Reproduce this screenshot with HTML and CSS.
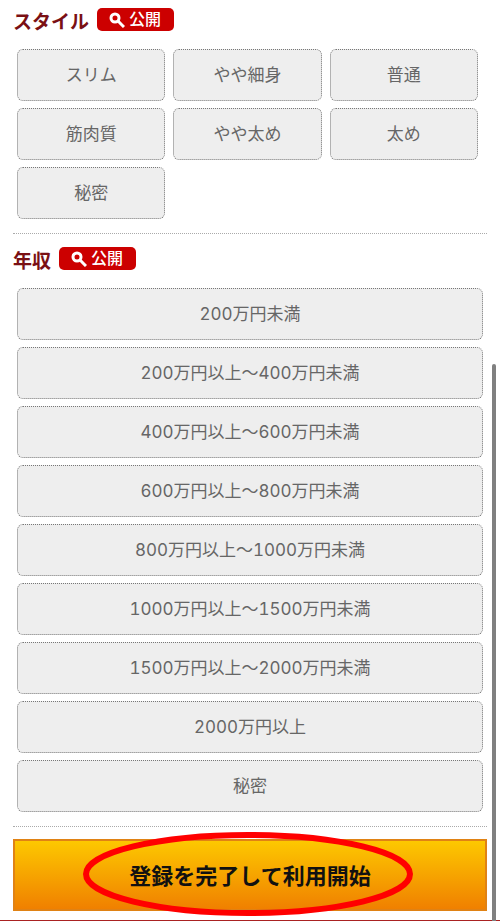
FILE: index.html
```html
<!DOCTYPE html>
<html lang="ja">
<head>
  <meta charset="UTF-8">
  <meta name="viewport" content="width=device-width, initial-scale=1.0">
  <title>プロフィール登録</title>
  <link rel="stylesheet" href="styles.css">
</head>
<body>
  <form class="profile-form">
    <!-- スタイル -->
    <section class="section" role="radiogroup" aria-labelledby="style-title">
      <div class="section-head">
        <h2 id="style-title">スタイル</h2>
        <span class="badge">
          <svg class="badge-icon" viewBox="0 0 16 16" aria-hidden="true"><circle cx="6" cy="6" r="4"/><path d="M9 9l6 6"/></svg>
          公開
        </span>
      </div>
      <div class="options options-grid">
        <label class="option"><input type="radio" name="style" value="1">スリム</label>
        <label class="option"><input type="radio" name="style" value="2">やや細身</label>
        <label class="option"><input type="radio" name="style" value="3">普通</label>
        <label class="option"><input type="radio" name="style" value="4">筋肉質</label>
        <label class="option"><input type="radio" name="style" value="5">やや太め</label>
        <label class="option"><input type="radio" name="style" value="6">太め</label>
        <label class="option"><input type="radio" name="style" value="0">秘密</label>
      </div>
    </section>

    <!-- 年収 -->
    <section class="section" role="radiogroup" aria-labelledby="income-title">
      <div class="section-head">
        <h2 id="income-title">年収</h2>
        <span class="badge">
          <svg class="badge-icon" viewBox="0 0 16 16" aria-hidden="true"><circle cx="6" cy="6" r="4"/><path d="M9 9l6 6"/></svg>
          公開
        </span>
      </div>
      <div class="options">
        <label class="option"><input type="radio" name="income" value="1">200万円未満</label>
        <label class="option"><input type="radio" name="income" value="2">200万円以上～400万円未満</label>
        <label class="option"><input type="radio" name="income" value="3">400万円以上～600万円未満</label>
        <label class="option"><input type="radio" name="income" value="4">600万円以上～800万円未満</label>
        <label class="option"><input type="radio" name="income" value="5">800万円以上～1000万円未満</label>
        <label class="option"><input type="radio" name="income" value="6">1000万円以上～1500万円未満</label>
        <label class="option"><input type="radio" name="income" value="7">1500万円以上～2000万円未満</label>
        <label class="option"><input type="radio" name="income" value="8">2000万円以上</label>
        <label class="option"><input type="radio" name="income" value="0">秘密</label>
      </div>
    </section>

    <!-- 登録ボタン -->
    <div class="submit-area">
      <button type="submit" class="submit">登録を完了して利用開始</button>
      <svg class="submit-mark" viewBox="0 0 330 84" aria-hidden="true"><ellipse cx="165" cy="42" rx="162" ry="39"/></svg>
    </div>
  </form>
  <div class="footer-line"></div>
  <div class="scroll-thumb"></div>
</body>
</html>
```

FILE: styles.css
```css
* {
  box-sizing: border-box;
}
body {
  margin: 0;
  background: #fff;
  color: #666;
  font-family: Inter, "Noto Sans CJK JP", sans-serif;
  font-size: 17px;
}
.profile-form {
  padding: 0 13px;
}
.section {
  padding: 8px 0 14px;
  border-bottom: 1px dotted #aaa;
}
.section + .section {
  padding-top: 13px;
}
.section-head {
  display: flex;
  align-items: flex-start;
  gap: 8px;
  height: 41px;
}
.section-head h2 {
  margin: 0;
  color: #7a1014;
  font-size: 19px;
  line-height: 30px;
}
.badge {
  display: flex;
  align-items: center;
  gap: 4px;
  height: 23px;
  padding: 0 13px 0 12px;
  border-radius: 5px;
  background: #c00;
  color: #fff;
  font-size: 16px;
  font-weight: 500;
  line-height: 23px;
}
.badge-icon {
  width: 16px;
  height: 16px;
  fill: none;
  stroke: #fff;
  stroke-width: 3;
}
.options {
  display: grid;
  gap: 7px;
  padding: 0 4px;
}
.options-grid {
  grid-template-columns: repeat(3, 1fr);
  column-gap: 8px;
  padding-right: 9px;
}
.option {
  display: flex;
  align-items: center;
  justify-content: center;
  height: 52px;
  padding-bottom: 3px;
  border: 1px dotted #777;
  border-radius: 6px;
  background: #eee;
  font-variant-numeric: tabular-nums;
  cursor: pointer;
}
.option input {
  appearance: none;
  width: 0;
  height: 0;
  margin: 0;
}
.option:has(input:checked) {
  background: #fde3b0;
}
.submit-area {
  position: relative;
  padding: 12px 0 9px;
}
.submit {
  display: block;
  width: 100%;
  height: 72px;
  padding: 0 0 3px;
  border: 2px solid #e08214;
  background: linear-gradient(#fdc800, #f08000);
  color: #111;
  font-family: inherit;
  font-size: 22px;
  font-weight: 700;
  cursor: pointer;
}
/* 赤丸の強調 */
.submit-mark {
  position: absolute;
  top: 5px;
  left: 50%;
  width: 330px;
  height: 84px;
  margin-left: -167px;
  fill: none;
  stroke: #f00;
  stroke-width: 6;
  pointer-events: none;
}
.footer-line {
  height: 1px;
  background: #a22;
}
.scroll-thumb {
  position: fixed;
  top: 364px;
  right: 4px;
  bottom: 0;
  width: 4px;
  border-radius: 2px 2px 0 0;
  background: #808080;
}
```
